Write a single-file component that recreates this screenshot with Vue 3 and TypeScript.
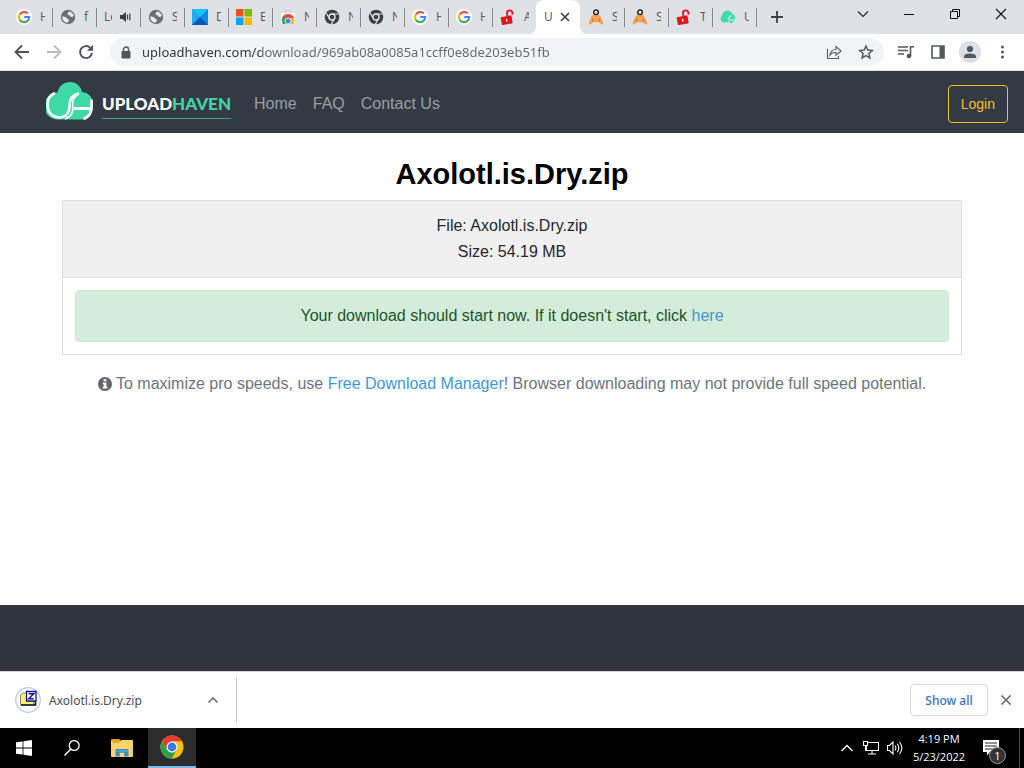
<script setup lang="ts">
import { ref } from 'vue'

interface Tab {
  label: string
  icon?: string
  audible?: boolean
  active?: boolean
}

const tabs: Tab[] = [
  { label: 'H', icon: 'google' },
  { label: 'f', icon: 'globe' },
  { label: 'Le', audible: true },
  { label: 'S', icon: 'globe' },
  { label: 'D', icon: 'azure' },
  { label: 'E', icon: 'microsoft' },
  { label: 'N', icon: 'store' },
  { label: 'N', icon: 'chrome-dark' },
  { label: 'N', icon: 'chrome-dark' },
  { label: 'H', icon: 'google' },
  { label: 'H', icon: 'google' },
  { label: 'A', icon: 'unlock' },
  { label: 'U', active: true },
  { label: 'S', icon: 'person' },
  { label: 'S', icon: 'person' },
  { label: 'T', icon: 'unlock' },
  { label: 'U', icon: 'cloud' },
]

const address = ref('uploadhaven.com/download/969ab08a0085a1ccff0e8de203eb51fb')
const fileName = 'Axolotl.is.Dry.zip'
const fileSize = '54.19 MB'
const navLinks = ['Home', 'FAQ', 'Contact Us']
</script>

<template>
  <div class="desktop">
    <svg class="sprite" aria-hidden="true">
      <symbol id="google" viewBox="0 0 16 16">
        <circle cx="8" cy="8" r="8" fill="#fff" />
        <path d="M3.8 5.4A5.2 5.2 0 0 1 11.8 4.3" fill="none" stroke="#ea4335" stroke-width="2" />
        <path d="M3.8 10.9A5.2 5.2 0 0 1 3.8 5.2" fill="none" stroke="#fbbc05" stroke-width="2" />
        <path d="M11.6 11.8A5.2 5.2 0 0 1 3.7 10.7" fill="none" stroke="#34a853" stroke-width="2" />
        <path d="M8.2 8.1h5A5.2 5.2 0 0 1 11.4 12" fill="none" stroke="#4285f4" stroke-width="2" />
      </symbol>
      <symbol id="globe" viewBox="0 0 16 16">
        <circle cx="8" cy="8" r="7.2" fill="#6b6e72" />
        <path d="M8.6 2.2c2.7.2 4.8 2.1 5.2 4.7-1 .5-1.300 1.400-2.500 1.100C10 7.700 10.500 6.300 9.200 6.200 7.900 6.200 7 5.700 7.500 4.600c.3-.8 1.200-.7 1.100-2.400zM2.200 7.200c1.500.5 3 .4 4.200 1.200 1.100.8.400 1.500 1.800 1.800 1.300.3.900 1.300.300 1.900-.500.600-.400 1.200-.700 1.700C4.600 13.600 1.900 11 2.200 7.200z" fill="#e6e8eb" />
      </symbol>
      <symbol id="azure" viewBox="0 0 16 16">
        <path d="M0 0h16v16H0z" fill="#0c8de0" />
        <path d="M0 0h16L8 8z" fill="#19c5f5" />
        <path d="M0 0l8 8-8 8z" fill="#22a9ee" />
        <path d="M0 16l8-8 8 8z" fill="#0b54b8" />
      </symbol>
      <symbol id="microsoft" viewBox="0 0 16 16">
        <path d="M0 0h7.500v7.500H0z" fill="#f25022" />
        <path d="M8.500 0H16v7.500H8.500z" fill="#7fba00" />
        <path d="M0 8.500h7.500V16H0z" fill="#00a4ef" />
        <path d="M8.500 8.500H16V16H8.500z" fill="#ffb900" />
      </symbol>
      <symbol id="store" viewBox="0 0 16 16">
        <path d="M5.500 4V2.500q0-1 1-1h3q1 0 1 1V4" fill="none" stroke="#c4c7ca" />
        <path d="M1 4h14v9.500q0 1.500-1.500 1.500h-11Q1 15 1 13.500z" fill="#f4f5f6" />
        <path d="M2 9A6.500 6.500 0 0 1 14 9z" fill="#e64a3c" />
        <path d="M2 9h6v6H2.500Q1.500 12 2 9z" fill="#34a853" />
        <path d="M8 9h6q.8 3-.500 6H8z" fill="#fbbc05" />
        <circle cx="8" cy="12" r="3" fill="#4285f4" stroke="#fff" stroke-width=".8" />
      </symbol>
      <symbol id="chrome-dark" viewBox="0 0 16 16">
        <circle cx="8" cy="8" r="7.300" fill="#3c4043" />
        <circle cx="8" cy="8" r="3" fill="none" stroke="#e8eaed" stroke-width="1.300" />
        <path d="M8 5h6.500M5.400 9.500L2 3.800M10.600 9.500L7.300 15.300" stroke="#e8eaed" stroke-width="1.200" />
      </symbol>
      <symbol id="unlock" viewBox="0 0 16 16">
        <g transform="rotate(-10 8 10)">
          <path d="M8 7.500V4.500a2.700 2.700 0 0 1 5.400 0V6.500" fill="none" stroke="#e0141c" stroke-width="1.900" />
          <path d="M1 7h11v7q0 1-1 1H2q-1 0-1-1z" fill="#e0141c" />
          <path d="M6.500 9.500v3" stroke="#fff" stroke-width="1.300" />
        </g>
      </symbol>
      <symbol id="person" viewBox="0 0 16 16">
        <path d="M8 5.500c3.500 0 4.800 1.500 5.200 4l2.300 4.500-1.300 1.800-3.700-2.500h-5l-3.700 2.500L.5 14l2.300-4.500C3.200 7 4.500 5.500 8 5.500z" fill="#f2a057" />
        <path d="M4.500 9.500v3M11.500 9.500v3" stroke="#c77b35" />
        <circle cx="8" cy="3.300" r="2.300" fill="#fff" stroke="#222" stroke-width="1.500" />
      </symbol>
      <symbol id="cloud" viewBox="0 0 16 16">
        <path d="M4 13.500A4 4 0 0 1 2 6.500 5.500 5.500 0 0 1 12.500 5a4.300 4.300 0 0 1 2 6.500L12 14H9l1-3q-2 2.500-6 2.500z" fill="#3fdcaa" />
        <path d="M8 10.500q1-3 3.500-4M9.500 11h5" fill="none" stroke="#e4f8f1" stroke-width="1.200" />
      </symbol>
    </svg>

    <header class="chrome">
      <div class="tabstrip">
        <div class="tabs" role="tablist">
          <div v-for="(tab, i) in tabs" :key="i" class="tab" :class="{ active: tab.active, before: tabs[i + 1]?.active }">
            <button class="tab-button" role="tab" :aria-selected="!!tab.active">
              <svg v-if="tab.icon" class="i16"><use :href="'#' + tab.icon" /></svg>
              <span class="tab-label" :class="{ wide: !tab.icon }">{{ tab.label }}</span>
              <svg v-if="tab.audible" class="audio" viewBox="0 0 12 12"><path d="M0 4h2.500L6 1v10L2.500 8H0z" fill="#3c4043" /><path d="M7.500 3.500v5M9.800 2.500v7" stroke="#3c4043" stroke-width="1.200" /></svg>
            </button>
            <button v-if="tab.active" class="tab-close" aria-label="Close tab">
              <svg viewBox="0 0 10 10"><path d="M1 1l8 8M9 1L1 9" stroke="#3c4043" stroke-width="1.700" /></svg>
            </button>
          </div>
        </div>
        <button class="new-tab" aria-label="New tab"><svg viewBox="0 0 12 12"><path d="M6 0v12M0 6h12" stroke="#3c4043" stroke-width="1.800" /></svg></button>
        <div class="window-controls">
          <button aria-label="Search tabs"><svg viewBox="0 0 12 12"><path d="M1 3.500l5 5 5-5" fill="none" stroke="#222" stroke-width="1.100" /></svg></button>
          <button aria-label="Minimize"><svg viewBox="0 0 12 12"><path d="M1 6.500h10" stroke="#111" /></svg></button>
          <button aria-label="Restore"><svg viewBox="0 0 12 12"><path d="M1.500 3.500h7v7h-7zM3.500 3.500v-2h7v7h-2" fill="none" stroke="#111" /></svg></button>
          <button aria-label="Close window"><svg viewBox="0 0 12 12"><path d="M1 1l10 10M11 1L1 11" stroke="#111" stroke-width="1.100" /></svg></button>
        </div>
      </div>

      <div class="toolbar">
        <button class="tool" aria-label="Back"><svg viewBox="0 0 16 16"><path d="M15 8H2M8 1.500L1.500 8 8 14.500" fill="none" stroke="#4d5156" stroke-width="1.800" /></svg></button>
        <button class="tool" aria-label="Forward"><svg viewBox="0 0 16 16"><path d="M1 8h13M8 1.500L14.500 8 8 14.500" fill="none" stroke="#babcbe" stroke-width="1.800" /></svg></button>
        <button class="tool" aria-label="Reload"><svg viewBox="0 0 16 16"><path d="M14 9A6 6 0 1 1 12.300 3.800L13.500 5" fill="none" stroke="#4d5156" stroke-width="1.900" /><path d="M15 .8v6H9z" fill="#4d5156" /></svg></button>
        <form class="omnibox" @submit.prevent>
          <label for="address" aria-label="Address"><svg class="lock" viewBox="0 0 10 13"><path d="M2.500 6V3.500a2.500 2.500 0 0 1 5 0V6" fill="none" stroke="#54585c" stroke-width="1.400" /><rect x="0.500" y="5" width="9" height="7.500" rx="1" fill="#54585c" /></svg></label>
          <input id="address" v-model="address" type="text" spellcheck="false" />
          <button class="tool" type="button" aria-label="Share"><svg viewBox="0 0 16 16"><path d="M1.500 5v9.500h11V12M4 11c.5-4 3-5.500 6-5.500v-3L15 7l-5 4.300V8.500C7.500 8.300 5.500 9 4 11z" fill="none" stroke="#5f6368" stroke-width="1.200" /></svg></button>
          <button class="tool" type="button" aria-label="Bookmark"><svg viewBox="0 0 16 16"><path d="M8 2l1.800 4.100 4.500.4-3.400 3 1 4.400L8 11.600l-3.900 2.300 1-4.400-3.400-3 4.500-.4z" fill="none" stroke="#54585c" stroke-width="1.500" /></svg></button>
        </form>
        <button class="tool" aria-label="Media"><svg viewBox="0 0 16 16"><path d="M0 3h10M0 6.500h10M0 10h6M12.500 12V2.800H16" fill="none" stroke="#54585c" stroke-width="1.600" /><circle cx="11" cy="12" r="2.300" fill="#54585c" /></svg></button>
        <button class="tool" aria-label="Side panel"><svg viewBox="0 0 16 16"><path d="M2 2h12v12H2z" fill="none" stroke="#54585c" stroke-width="1.600" /><path d="M9.500 2H14v12H9.500z" fill="#54585c" /></svg></button>
        <button class="tool avatar" aria-label="Profile"><svg viewBox="0 0 22 22"><circle cx="11" cy="11" r="11" fill="#dcdfe4" /><circle cx="11" cy="8" r="3.100" fill="#4d5a66" /><path d="M5 17v-1.500q0-3 6-3t6 3V17z" fill="#4d5a66" /></svg></button>
        <button class="tool" aria-label="Menu"><svg viewBox="0 0 16 16"><g fill="#54585c"><circle cx="8.500" cy="3" r="1.500" /><circle cx="8.500" cy="8" r="1.500" /><circle cx="8.500" cy="13" r="1.500" /></g></svg></button>
      </div>
    </header>

    <div class="page">
      <nav class="navbar">
        <a class="brand" href="#" aria-label="UploadHaven">
          <svg class="brand-cloud" viewBox="0 0 48 38">
            <path d="M12 37.500A13.500 13.500 0 0 1 11.500 10.500C13 4 18 0 24 0c6.500 0 11 4.500 12 10 7 .5 11 6 11 12.500C47 31 43 37.500 35 37.500z" fill="#3fd9a5" />
            <path d="M9 11C3 13.500 1.500 18 1.500 22.500 1.500 31 7 35.500 13 35.500c7 0 10.500-5 10.500-11.500 0-7 3.500-11.500 9.500-12.500" fill="none" stroke="#fff" stroke-width="2.600" />
            <path d="M33 11.500c-5 3-7 6.500-6.300 11.500.9 6.500-1.700 12-7.700 14" fill="none" stroke="#fff" stroke-width="1.600" />
            <path d="M28 26.500h16M45.500 17.500V25c0 6-2.500 10-8 12" fill="none" stroke="#fff" stroke-width="2.800" />
          </svg>
          <span class="brand-name">UPLOAD<span class="brand-haven">HAVEN</span></span>
        </a>
        <div class="nav-links"><a v-for="link in navLinks" :key="link" href="#">{{ link }}</a></div>
        <button class="login">Login</button>
      </nav>

      <main>
        <h1>{{ fileName }}</h1>
        <section class="card">
          <div class="card-header">
            <div>File: {{ fileName }}</div>
            <div>Size: {{ fileSize }}</div>
          </div>
          <div class="card-body">
            <div class="alert" role="status">Your download should start now. If it doesn't start, click <a href="#">here</a></div>
          </div>
        </section>
        <p class="hint">
          <svg viewBox="0 0 14 14"><circle cx="7" cy="7" r="7" fill="#63676b" /><path d="M5.600 2.300h2.800v2H5.600zM4.800 5.500h3.600v4.300h1v1.700H4.700V9.800h1V7.200h-.900z" fill="#fff" /></svg>
          To maximize pro speeds, use <a href="#">Free Download Manager</a>! Browser downloading may not provide full speed potential.
        </p>
      </main>
      <footer class="footer"></footer>
    </div>

    <div class="downloads">
      <div class="download">
        <button class="download-file">
          <svg viewBox="0 0 26 26">
            <circle cx="13" cy="13" r="12.300" fill="#f8fafd" stroke="#b5cbe2" stroke-width="1.200" />
            <path d="M5.500 8l2-2h4v3h7v9h-13z" fill="#f4f27e" stroke="#77772a" stroke-width=".8" />
            <path d="M6 18h14.500V14" fill="none" stroke="#111" stroke-width="1.600" />
            <path d="M11.500 4.500H21V14h-9.500z" fill="#fff" stroke="#161682" stroke-width="1.300" />
            <path d="M13.700 6.800h5l-5 5h5" fill="none" stroke="#161682" stroke-width="1.500" />
          </svg>
          <span>{{ fileName }}</span>
        </button>
        <button class="download-menu" aria-label="Download options"><svg viewBox="0 0 12 12"><path d="M1.500 8.500L6 4l4.500 4.500" fill="none" stroke="#6b6e72" stroke-width="1.600" /></svg></button>
      </div>
      <button class="show-all">Show all</button>
      <button class="close-bar" aria-label="Close downloads bar"><svg viewBox="0 0 12 12"><path d="M1.500 1.500l9 9M10.500 1.500l-9 9" stroke="#6b6e72" stroke-width="1.700" /></svg></button>
    </div>

    <div class="taskbar">
      <button class="task" aria-label="Start"><svg viewBox="0 0 16 16"><path d="M0 2.300l6.600-.9v6.100H0zM7.400 1.200L16 0v7.500H7.400zM0 8.400h6.600v6.200L0 13.700zM7.400 8.400H16V16l-8.600-1.200z" fill="#fff" /></svg></button>
      <button class="task" aria-label="Search"><svg viewBox="0 0 16 16"><circle cx="10.200" cy="5.500" r="4.900" fill="none" stroke="#fff" stroke-width="1.300" /><path d="M6.800 9L.5 15.500" stroke="#fff" stroke-width="1.500" /></svg></button>
      <button class="task explorer" aria-label="File Explorer">
        <svg viewBox="0 0 22 18"><path d="M0 1q0-1 1-1h7l2 2h-10z" fill="#e2a428" /><path d="M0 2h9.500l1-1H21q1 0 1 1v15q0 1-1 1H1q-1 0-1-1z" fill="#fbd468" /><path d="M1.500 3h7" stroke="#bd7f13" /><path d="M4.500 17.500V11q0-1 1-1h11q1 0 1 1v6.500h-4.300v-3.700H8.800v3.700z" fill="#3b8cca" /><path d="M4.500 12h13" stroke="#63b1e6" /></svg>
      </button>
      <button class="task chrome-task" aria-label="Google Chrome">
        <svg viewBox="0 0 24 24"><circle cx="12" cy="12" r="11.500" fill="#fbc116" /><path d="M2 6.300A11.500 11.500 0 0 1 22 6.300H12L7 14.800z" fill="#e33b2e" /><path d="M2 6.300A11.500 11.500 0 0 0 11.500 23.500L16.800 14.800H7z" fill="#2ca14c" /><circle cx="12" cy="12" r="5.500" fill="#fff" /><circle cx="12" cy="12" r="4.400" fill="#377ce2" /></svg>
      </button>
      <div class="tray">
        <button class="tray-icon" aria-label="Show hidden icons"><svg viewBox="0 0 16 16"><path d="M2.500 11L8 5.500l5.500 5.500" fill="none" stroke="#fff" stroke-width="1.300" /></svg></button>
        <button class="tray-icon" aria-label="Network"><svg viewBox="0 0 16 16"><path d="M5 2.500h10.500v8H3.500V6M9 10.500v3M5 14h8M.5 1.500h4v4h-4zM2.500 5.500v5h1" fill="none" stroke="#fff" stroke-width="1.100" /></svg></button>
        <button class="tray-icon" aria-label="Volume"><svg viewBox="0 0 16 16"><path d="M.5 5.500h2L6 2v12l-3.500-3.500h-2zM8 5.500q1.800 2.500 0 5M10.300 3.800q3 4.200 0 8.400M12.600 2q4.500 6 0 12" fill="none" stroke="#fff" stroke-width="1.100" /></svg></button>
        <button class="clock"><span>4:19 PM</span><span>5/23/2022</span></button>
        <button class="notice" aria-label="Notifications, 1 new">
          <svg viewBox="0 0 16 16"><path d="M0 0h16v12H7l-3 3.500V12H0z" fill="#fff" /><path d="M2 3h12M2 6h12M2 9h8" stroke="#222" stroke-width="1.200" /></svg>
          <span class="badge">1</span>
        </button>
      </div>
    </div>
  </div>
</template>

<style>
body {
  margin: 0;
}
</style>

<style scoped>
.desktop {
  display: flex;
  flex-direction: column;
  min-height: 100vh;
  background: #fff;
  font-family: 'Open Sans', 'Noto Sans', sans-serif;
  overflow: hidden;
}
.sprite {
  position: absolute;
  width: 0;
  height: 0;
}
button {
  display: flex;
  align-items: center;
  justify-content: center;
  padding: 0;
  border: 0;
  background: none;
  font: inherit;
  flex: none;
}
svg {
  display: block;
  flex: none;
}
a {
  color: #4398d2;
  text-decoration: none;
}

.tabstrip {
  display: flex;
  align-items: flex-start;
  height: 34px;
  background: #dee1e6;
}
.tabs {
  display: flex;
  padding-left: 8px;
}
.tab {
  position: relative;
  display: flex;
  align-items: center;
  width: 44px;
  height: 34px;
}
.tab::after {
  content: '';
  position: absolute;
  right: -1px;
  top: 8px;
  width: 1px;
  height: 19px;
  background: #85888c;
}
.tab.before::after,
.tab.active::after {
  display: none;
}
.tab.active {
  background: #fff;
  border-radius: 8px 8px 0 0;
}
.tab.active::before {
  content: '';
  position: absolute;
  left: -8px;
  right: -8px;
  bottom: 0;
  height: 8px;
  background:
    radial-gradient(circle at 0 0, transparent 8px, #fff 8px) left / 8px 8px no-repeat,
    radial-gradient(circle at 100% 0, transparent 8px, #fff 8px) right / 8px 8px no-repeat;
}
.tab-button {
  justify-content: flex-start;
  gap: 8px;
  padding-left: 8px;
  height: 34px;
}
.i16 {
  width: 16px;
  height: 16px;
}
.tab-label {
  width: 5px;
  overflow: hidden;
  font-size: 12px;
  line-height: 18px;
  text-align: left;
  color: #55585c;
}
.tab-label.wide {
  width: 8px;
}
.audio {
  width: 12px;
  height: 12px;
}
.tab-close {
  width: 16px;
  height: 16px;
  margin-left: 5px;
}
.tab-close svg {
  width: 10px;
  height: 10px;
}
.new-tab {
  width: 28px;
  height: 34px;
  margin-left: 7px;
}
.new-tab svg {
  width: 12px;
  height: 12px;
}
.window-controls {
  display: flex;
  margin-left: auto;
}
.window-controls button {
  width: 46px;
  height: 28px;
}
.window-controls svg {
  width: 12px;
  height: 12px;
}

.toolbar {
  display: flex;
  align-items: center;
  height: 36px;
  padding: 0 6px;
  border-bottom: 1px solid #dfe1e4;
  background: #fff;
}
.tool {
  width: 32px;
  height: 28px;
}
.tool svg {
  width: 16px;
  height: 16px;
}
.avatar svg {
  width: 22px;
  height: 22px;
}
.omnibox {
  display: flex;
  align-items: center;
  flex: 1;
  min-width: 0;
  height: 28px;
  margin: 0 6px 0 8px;
  padding: 0 2px 0 11px;
  border-radius: 14px;
  background: #f1f3f4;
}
.lock {
  width: 10px;
  height: 13px;
}
.omnibox input {
  flex: 1;
  min-width: 0;
  height: 28px;
  margin-left: 11px;
  padding: 0;
  border: 0;
  outline: 0;
  background: linear-gradient(to right, #2f3336 119px, #63676c 119px);
  background-clip: text;
  -webkit-background-clip: text;
  -webkit-text-fill-color: transparent;
  font: 13px 'Noto Sans', 'Open Sans', sans-serif;
  color: #5f6368;
}

.page {
  display: flex;
  flex-direction: column;
  flex: 1;
  font-family: 'Liberation Sans', Arial, sans-serif;
  font-size: 16px;
}
.navbar {
  display: flex;
  align-items: center;
  box-sizing: border-box;
  min-height: 62px;
  padding: 4px 16px 0 46px;
  background: #343a43;
}
.brand {
  display: flex;
  align-items: flex-start;
  gap: 8px;
}
.brand-cloud {
  width: 48px;
  height: 38px;
  margin-bottom: 6px;
}
.brand-name {
  padding-top: 8px;
  border-bottom: 1px solid #3f9d80;
  font: 900 17px/28px Lato, sans-serif;
  color: #fff;
}
.brand-haven {
  color: #43d3a4;
}
.nav-links {
  display: flex;
  gap: 16px;
  margin-left: 23px;
}
.nav-links a {
  color: #9a9da2;
}
.login {
  height: 38px;
  margin-left: auto;
  padding: 0 12px;
  border: 1px solid #f3c126;
  border-radius: 4px;
  font-size: 14px;
  color: #f3c126;
}
main {
  flex: 1;
  padding: 24px 62px;
  text-align: center;
}
h1 {
  margin: 0 0 8px;
  font-size: 29px;
  line-height: 35px;
  color: #000;
}
.card {
  max-width: 898px;
  margin: 0 auto;
  border: 1px solid #dfdfdf;
  line-height: 26px;
  color: #24282c;
}
.card-header {
  padding: 12px;
  border-bottom: 1px solid #dfdfdf;
  background: #f0f0f0;
}
.card-body {
  padding: 12px;
}
.alert {
  padding: 12px;
  border: 1px solid #cbe8d3;
  border-radius: 4px;
  background: #d4edda;
  color: #1b5429;
}
.hint {
  margin: 16px 0 0;
  line-height: 26px;
  color: #6c757d;
}
.hint svg {
  display: inline-block;
  width: 14px;
  height: 14px;
  vertical-align: -2px;
}
.footer {
  height: 66px;
  background: #30353f;
}

.downloads {
  display: flex;
  align-items: center;
  height: 56px;
  padding-right: 10px;
  border-top: 1px solid #d5d7da;
  background: #fff;
}
.download {
  display: flex;
  align-items: center;
  justify-content: space-between;
  width: 236px;
  height: 44px;
  border-right: 1px solid #c4c6c9;
}
.download-file {
  gap: 8px;
  padding-left: 15px;
  font-family: 'Noto Sans', 'Open Sans', sans-serif;
  font-size: 12px;
  color: #4a4d51;
}
.download-file svg {
  width: 26px;
  height: 26px;
}
.download-menu {
  width: 46px;
  height: 32px;
}
.download-menu svg,
.close-bar svg {
  width: 12px;
  height: 12px;
}
.show-all {
  width: 78px;
  height: 32px;
  margin-left: auto;
  border: 1px solid #d8dadd;
  border-radius: 4px;
  font-family: 'Noto Sans', 'Open Sans', sans-serif;
  font-size: 12px;
  font-weight: 500;
  color: #3a6fc0;
}
.close-bar {
  width: 16px;
  height: 32px;
  margin-left: 10px;
}

.taskbar {
  display: flex;
  height: 40px;
  background: #000;
  color: #fff;
}
.task {
  width: 48px;
}
.task svg {
  width: 16px;
  height: 16px;
}
.explorer {
  width: 52px;
}
.explorer svg {
  width: 22px;
  height: 18px;
}
.chrome-task {
  border-bottom: 2px solid #76b9ed;
  background: #2d2d2d;
}
.chrome-task svg {
  width: 24px;
  height: 24px;
}
.tray {
  display: flex;
  margin-left: auto;
  padding-right: 4px;
}
.tray-icon {
  width: 24px;
}
.tray-icon svg {
  width: 16px;
  height: 16px;
}
.clock {
  flex-direction: column;
  width: 64px;
  font-size: 11px;
  line-height: 18px;
  color: #fff;
}
.notice {
  position: relative;
  width: 49px;
  padding-right: 8px;
  border-right: 1px solid #4a4a4a;
}
.notice svg {
  width: 16px;
  height: 16px;
}
.badge {
  position: absolute;
  right: 13px;
  bottom: 4px;
  width: 15px;
  border: 1px solid #999;
  border-radius: 50%;
  background: #333;
  font-size: 11px;
  line-height: 15px;
  text-align: center;
  color: #fff;
}
</style>
